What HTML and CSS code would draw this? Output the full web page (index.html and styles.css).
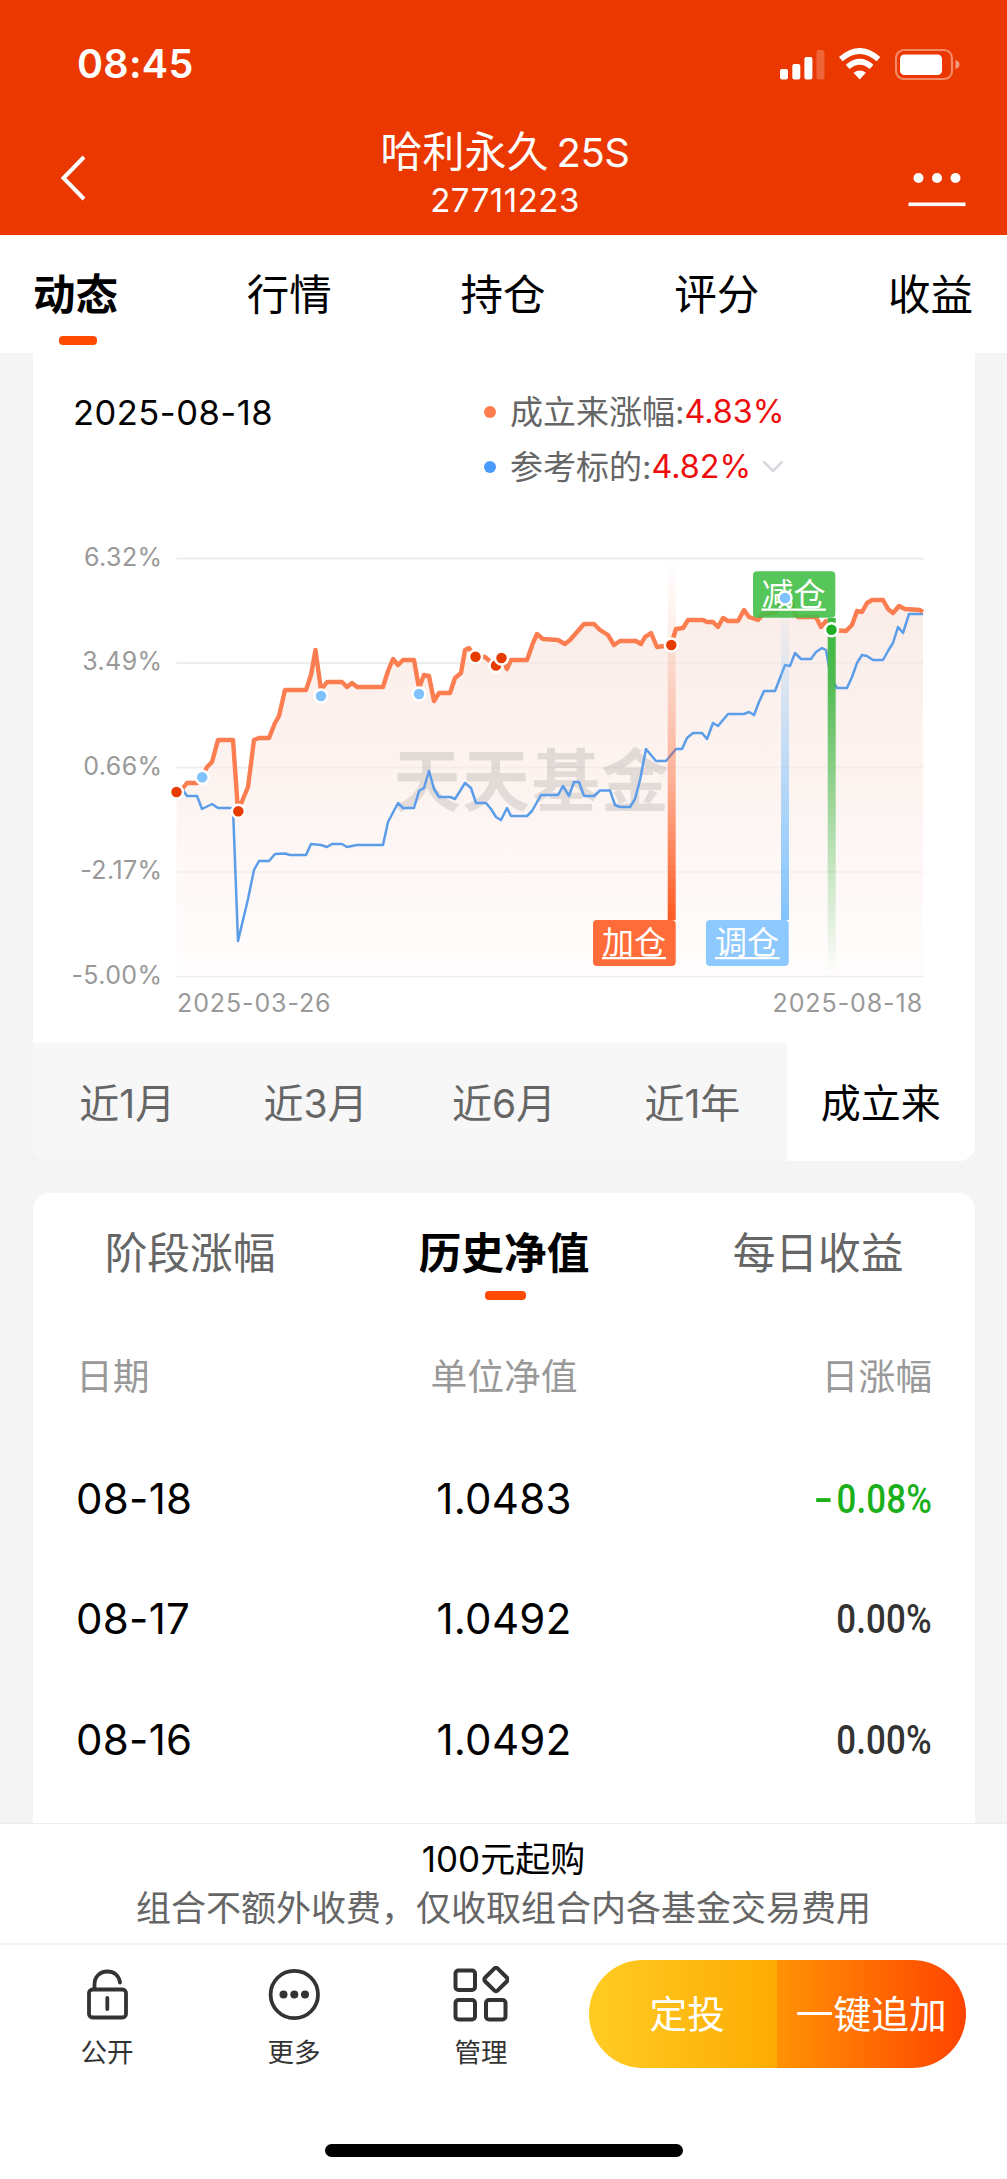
FILE: index.html
```html
<!DOCTYPE html>
<html lang="zh-CN">

<head>
    <meta charset="UTF-8" />
    <meta name="viewport" content="width=device-width, initial-scale=1.0" />
    <title>哈利永久25S</title>
    <link rel="stylesheet" href="styles.css">
</head>

<body>
    <header class="header">
        <div class="status-bar">
            <span class="time">08:45</span>
            <svg class="status-icons" width="182" height="36" viewBox="779 45 182 36" fill="#fff">
                <rect x="780" y="68" width="8" height="10.5" rx="2" />
                <rect x="792.3" y="63" width="8" height="15.5" rx="2" />
                <rect x="804.4" y="56" width="8" height="22.5" rx="2" />
                <rect x="816.5" y="49" width="8" height="29.5" rx="2" opacity=".22" />
                <path d="M840.8 58.2Q859.7 41.8 878.5 58.2M847.7 65.9Q859.7 55.6 871.6 65.9" fill="none" stroke="#fff" stroke-width="5.6" />
                <path d="M853.5 71.8q6.2-4.8 12.4 0l-6.2 6.7z" />
                <rect x="896" y="49" width="56" height="29" rx="8" fill="none" stroke="#fff" stroke-width="2.2" opacity=".42" />
                <rect x="900" y="53.5" width="42" height="20.5" rx="4.5" />
                <path d="M955.5 59q4 1.2 4 4.6t-4 4.6z" opacity=".5" />
            </svg>
        </div>
        <div class="nav-bar">
            <svg class="back" width="28" height="48" viewBox="0 0 28 48" fill="none" stroke="#fff" stroke-width="4">
                <path d="M24 3L3.5 24L24 45" />
            </svg>
            <div class="nav-title">
                <h1>哈利永久<span class="num">25S</span></h1>
                <p>27711223</p>
            </div>
            <svg class="more" width="58" height="36" viewBox="0 0 58 36" fill="#fff">
                <circle cx="10.5" cy="7" r="5" />
                <circle cx="29" cy="7" r="5" />
                <circle cx="47.5" cy="7" r="5" />
                <rect x="0.5" y="31.5" width="57" height="3.6" />
            </svg>
        </div>
    </header>

    <nav class="tabs">
        <a class="tab active">动态</a>
        <a class="tab">行情</a>
        <a class="tab">持仓</a>
        <a class="tab">评分</a>
        <a class="tab">收益</a>
    </nav>

    <main class="content">
        <section class="card chart-card">
            <div class="summary">
                <div class="summary-date">2025-08-18</div>
                <div class="legend">
                    <div class="legend-row"><i class="dot orange"></i>成立来涨幅:<b>4.83%</b></div>
                    <div class="legend-row"><i class="dot blue"></i>参考标的:<b>4.82%</b>
                        <svg width="22" height="14" viewBox="0 0 22 14" fill="none" stroke="#d5d8e0" stroke-width="2.5">
                            <path d="M1.5 1.5L11 11L20.5 1.5" />
                        </svg>
                    </div>
                </div>
            </div>

            <svg class="chart" width="942" height="523" viewBox="33 520 942 523">
                <defs>
                    <linearGradient id="area" x1="0" y1="598" x2="0" y2="976" gradientUnits="userSpaceOnUse">
                        <stop offset="0" stop-color="#f9e7e1" stop-opacity=".75" />
                        <stop offset=".5" stop-color="#fbece7" stop-opacity=".6" />
                        <stop offset="1" stop-color="#fffafa" stop-opacity=".5" />
                    </linearGradient>
                    <linearGradient id="barAdd" x1="0" y1="0" x2="0" y2="1">
                        <stop offset="0" stop-color="#ff5a22" stop-opacity="0" />
                        <stop offset=".25" stop-color="#ff5a22" stop-opacity=".12" />
                        <stop offset=".6" stop-color="#ff5a22" stop-opacity=".42" />
                        <stop offset="1" stop-color="#ff5a22" />
                    </linearGradient>
                    <linearGradient id="barSwap" x1="0" y1="0" x2="0" y2="1">
                        <stop offset="0" stop-color="#82c3fc" stop-opacity="0" />
                        <stop offset="1" stop-color="#82c3fc" />
                    </linearGradient>
                    <linearGradient id="barCut" x1="0" y1="0" x2="0" y2="1">
                        <stop offset="0" stop-color="#3dba41" />
                        <stop offset=".15" stop-color="#4cba4d" />
                        <stop offset="1" stop-color="#5ec45f" stop-opacity="0" />
                    </linearGradient>
                </defs>

                <!-- 网格 -->
                <g stroke="#ededed" stroke-width="2">
                    <path d="M176.5 558.5H923.5M176.5 663H923.5M176.5 767.5H923.5M176.5 872H923.5M176.5 976.5H923.5" />
                </g>
                <g class="axis" text-anchor="end">
                    <text x="162.5" y="565.5">6.32%</text>
                    <text x="162.5" y="670">3.49%</text>
                    <text x="162.5" y="774.5">0.66%</text>
                    <text x="162.5" y="879">-2.17%</text>
                    <text x="162.5" y="983.5">-5.00%</text>
                </g>
                <g class="axis">
                    <text x="177" y="1011.5" textLength="154">2025-03-26</text>
                    <text x="772.5" y="1011.5" textLength="150">2025-08-18</text>
                </g>

                <path fill="url(#area)" d="M176.5 792L183 788L187 783H197L202 777L207 767L212 762L218 740H233L238 811L248 787L254 740L259 738H269L275 723L279 716L285 690H306L311 675L315 649L321 690L327 682H342L347 687L352 683L357 687H383L388 671L393 659L398 665L403 660H414L419 688L424 675L429 676L434 701L439 693H450L455 678L461 673L465 650L469 648L475 657H485L491 662L496 666L501 658L507 669L511 660H527L533 643L537 634L543 639L558 640L565 644L570 640L584 624H594L600 630L608 635L614 645L620 641H636L641 644L645 637L651 633L657 647L671 645L676 629L683 628L688 620H703L707 622H713L718 627L723 618L728 621H738L744 610L749 617L758 620L763 614L775 613L785 598L792 602L795 614L798 617H816L821 627L826 621L831 630L846 631L852 625L857 611L862 612L867 603L872 600H883L888 609L893 613L899 606L905 609L920 610L923 612V976H176.5Z" />
                <text class="watermark" x="393" y="806" textLength="276">天天基金</text>
                <path class="line-blue" d="M176.5 792L183 790L187 796H197L202 809L212 804L218 808H233L238 941L248 899L254 870L259 861H269L275 854L285 853.5L290 855H306L311 844L321 845L327 847L332 844H342L347 847L357 845H383L388 822L398 803L403 808H414L419 791L424 788L429 771L434 789L439 797H450L455 799L465 783L471 788L476 803H486L491 809L496 817L501 820L507 808L511 816H527L532 811L541 795H558L563 786L569 796L574 782H579L584 796H594L600 790.5H610L615 805L620 807H630L635 799L640 780L646 749L656 761H666L671 755L676 749H682L687 738L693 733H702L707 739L713 723L718 726L728 714H744L749 712L754 715L759 702L764 691H775L785 665L790 666L795 653L801 659H811L816 652L822 648L826 650L831 678L837 688H847L852 677L857 663L862 655L867 656L873 660H883L888 651L893 643L898 627L903 633L909 614H923" />
                <path class="line-orange" d="M176.5 792L183 788L187 783H197L202 777L207 767L212 762L218 740H233L238 811L248 787L254 740L259 738H269L275 723L279 716L285 690H306L311 675L315.5 650L321 690L327 682H342L347 687L352 683L357 687H383L388 671L393 659L398 665L403 660H414L419 688L424 675L429 676L434 701L439 693H450L455 678L461 673L465 650L469 648L475 657H485L491 662L496 666L501 658L507 669L511 660H527L533 643L537 634L543 639L558 640L565 644L570 640L584 624H594L600 630L608 635L614 645L620 641H636L641 644L645 637L651 633L657 647L671 645L676 629L683 628L688 620H703L707 622H713L718 627L723 618L728 621H738L744 610L749 617L758 620L763 614L775 613L785 598L792 602L795 614L798 617H816L821 627L826 621L831 630L846 631L852 625L857 611L862 612L867 603L872 600H883L888 609L893 613L899 606L905 609L920 610L923 612" />

                <!-- 调仓标记 -->
                <rect x="667.7" y="558" width="8" height="362" fill="url(#barAdd)" />
                <rect x="781" y="598" width="8" height="322" fill="url(#barSwap)" />
                <rect x="827.7" y="618" width="8" height="355" fill="url(#barCut)" />
                <rect x="593" y="920" width="82.7" height="46" rx="4" fill="#ff6c39" />
                <rect x="706" y="920" width="82.7" height="46" rx="4" fill="#8dc8fe" />
                <rect x="753" y="571.3" width="82.3" height="46.5" rx="4" fill="#44bf48" fill-opacity=".9" />
                <g class="flag">
                    <text x="602" y="953.5">加仓</text>
                    <text x="715" y="953.5">调仓</text>
                    <text x="761.5" y="605.5">减仓</text>
                </g>
                <path d="M602 958.2H666M715 958.2H779.5M761.5 609.7H826" stroke="#fff" stroke-width="2.2" />

                <g fill="#e63c00" stroke="#fff" stroke-width="2.5">
                    <circle cx="176.5" cy="792" r="6.5" />
                    <circle cx="238.3" cy="811.3" r="6.5" />
                    <circle cx="475.5" cy="656.7" r="6.5" />
                    <circle cx="496" cy="665.5" r="6.5" />
                    <circle cx="501.5" cy="658" r="6.5" />
                    <circle cx="671.3" cy="645" r="6.5" />
                </g>
                <g fill="#7ec1fc" stroke="#fff" stroke-width="2.5">
                    <circle cx="202.2" cy="777.3" r="6.5" />
                    <circle cx="321" cy="696" r="6.5" />
                    <circle cx="419" cy="694" r="6.5" />
                    <circle cx="785" cy="598" r="6.5" />
                </g>
                <circle cx="831.5" cy="629.7" r="6.5" fill="#20ae26" stroke="#fff" stroke-width="2.5" />
            </svg>

            <div class="ranges">
                <a>近<span>1</span>月</a>
                <a>近<span>3</span>月</a>
                <a>近<span>6</span>月</a>
                <a>近<span>1</span>年</a>
                <a class="active">成立来</a>
            </div>
        </section>

        <section class="card history-card">
            <div class="sub-tabs">
                <a>阶段涨幅</a>
                <a class="active">历史净值</a>
                <a>每日收益</a>
            </div>
            <div class="row row-head"><span>日期</span><span>单位净值</span><span>日涨幅</span></div>
            <div class="row"><span>08-18</span><span>1.0483</span><span class="rate down"><i>-</i>0.08%</span></div>
            <div class="row"><span>08-17</span><span>1.0492</span><span class="rate">0.00%</span></div>
            <div class="row"><span>08-16</span><span>1.0492</span><span class="rate">0.00%</span></div>
        </section>
    </main>

    <footer class="footer">
        <div class="notice">
            <p class="notice-main"><span>100</span>元起购</p>
            <p class="notice-sub">组合不额外收费，仅收取组合内各基金交易费用</p>
        </div>
        <div class="actions">
            <a class="action">
                <svg width="56" height="56" viewBox="0 0 56 56" fill="none" stroke="#333" stroke-width="3.8" stroke-linecap="round">
                    <rect x="10" y="23.5" width="37" height="28" rx="3.5" />
                    <path d="M15.5 23V18.5C15.5 10.500 21 5.500 28.3 5.500C35 5.500 40 9.500 41 16.500M28.3 32V43" />
                </svg>
                公开
            </a>
            <a class="action">
                <svg width="56" height="56" viewBox="0 0 56 56" fill="#333">
                    <circle cx="28.3" cy="28.5" r="23.7" fill="none" stroke="#333" stroke-width="3.8" />
                    <circle cx="17.5" cy="28.5" r="4" />
                    <circle cx="28.3" cy="28.5" r="4" />
                    <circle cx="39" cy="28.5" r="4" />
                </svg>
                更多
            </a>
            <a class="action">
                <svg width="56" height="56" viewBox="0 0 56 56" fill="none" stroke="#333" stroke-width="4">
                    <rect x="2.5" y="4.5" width="19.5" height="19.5" rx="3" />
                    <rect x="2.5" y="34" width="19.5" height="19.5" rx="3" />
                    <rect x="33" y="34" width="19.5" height="19.5" rx="3" />
                    <rect x="34" y="4.5" width="18" height="18" rx="2.5" transform="rotate(45 43 13.5)" />
                </svg>
                管理
            </a>
            <div class="buttons">
                <a class="btn-plan">定投</a>
                <a class="btn-buy">一键追加</a>
            </div>
        </div>
        <div class="home-indicator"></div>
    </footer>
</body>

</html>
```

FILE: styles.css
```css
* {
    box-sizing: border-box;
}

body {
    margin: 0;
    height: 2179px;
    display: flex;
    flex-direction: column;
    overflow: hidden;
    font-family: Inter, "Noto Sans CJK SC", sans-serif;
    background-color: #f4f4f4;
    color: #000;
}

h1,
p {
    margin: 0;
    font-weight: 400;
}

i {
    font-style: normal;
}

svg {
    display: block;
    flex-shrink: 0;
}

.header {
    height: 235px;
    background-color: #ea3800;
    color: #fff;
}

.status-bar {
    height: 128px;
    padding: 0 46px 0 77px;
    display: flex;
    justify-content: space-between;
    align-items: center;
}

.time {
    font-size: 39.5px;
    font-weight: 600;
    letter-spacing: 0.3px;
}

.nav-bar {
    height: 107px;
    padding: 0 41px 0 60px;
    display: flex;
    justify-content: space-between;
}

.back {
    margin-top: 26px;
}

.more {
    margin-top: 43px;
}

.nav-title {
    text-align: center;
    padding-left: 14px;
}

.nav-title h1 {
    font-size: 42px;
    line-height: 48px;
}

.nav-title .num {
    margin-left: 8px;
    font-size: 40px;
    letter-spacing: -0.5px;
}

.nav-title p {
    font-size: 33px;
    line-height: 46px;
    letter-spacing: 0.5px;
}

.tabs {
    height: 118px;
    padding: 0 34px 0 33px;
    display: flex;
    justify-content: space-between;
    background-color: #fff;
    font-size: 42.5px;
}

.tab {
    height: 110px;
    line-height: 120px;
    display: flex;
    flex-direction: column;
    align-items: center;
}

.tab.active {
    font-weight: 700;
}

.tab.active::after {
    content: "";
    width: 38px;
    height: 9px;
    margin-top: -19px;
    margin-left: 4px;
    flex-shrink: 0;
    border-radius: 4px;
    background-color: #ff4a00;
}

.content {
    height: 1470px;
    padding: 0 32px 0 33px;
    display: flex;
    flex-direction: column;
    gap: 32px;
    overflow: hidden;
}

.card {
    background-color: #fff;
    overflow: hidden;
    flex-shrink: 0;
}

.chart-card {
    border-radius: 0 0 16px 16px;
}

.summary {
    height: 167px;
    padding: 31px 0 0 40px;
    display: flex;
}

.summary-date {
    width: 411px;
    font-size: 34.5px;
    line-height: 57px;
    letter-spacing: 0.5px;
}

.legend-row {
    height: 55px;
    display: flex;
    align-items: center;
    font-size: 33px;
    line-height: 46px;
    color: #666;
}

.legend-row b {
    font-weight: 400;
    font-size: 32.3px;
    color: #ee0c0c;
}

.legend-row svg {
    margin-left: 11px;
}

.dot {
    width: 12px;
    height: 12px;
    margin-right: 14px;
    border-radius: 50%;
}

.dot.orange {
    background-color: #ff7d4d;
}

.dot.blue {
    background-color: #4a9bff;
}

.chart text {
    font-family: Inter, "Noto Sans CJK SC", sans-serif;
}

.chart .axis {
    font-size: 25px;
    fill: #999;
    letter-spacing: 0.4px;
}

.chart .watermark {
    font-size: 68px;
    font-weight: 700;
    fill: #000;
    fill-opacity: 0.1;
}

.chart .flag {
    font-size: 32px;
    fill: #fff;
}

.line-orange,
.line-blue {
    fill: none;
    stroke-linejoin: round;
}

.line-orange {
    stroke: #fb7d50;
    stroke-width: 4.4;
}

.line-blue {
    stroke: #5b9de9;
    stroke-width: 2.5;
}

.ranges {
    height: 118px;
    display: flex;
    background-color: #f7f7f7;
    font-size: 40px;
    line-height: 122px;
    color: #666;
}

.ranges a {
    flex: 1;
    text-align: center;
}

.ranges span {
    font-size: 39px;
}

.ranges .active {
    background-color: #fff;
    color: #000;
}

.history-card {
    height: 640px;
    border-radius: 16px 16px 0 0;
}

.sub-tabs {
    height: 124px;
    display: flex;
    font-size: 42.7px;
    line-height: 121px;
    color: #666;
}

.sub-tabs a {
    flex: 1;
    height: 108px;
    display: flex;
    flex-direction: column;
    align-items: center;
}

.sub-tabs .active {
    font-weight: 700;
    color: #000;
}

.sub-tabs .active::after {
    content: "";
    width: 41px;
    height: 9px;
    margin-top: -23px;
    margin-left: 2px;
    flex-shrink: 0;
    border-radius: 4px;
    background-color: #ff4a00;
}

.row {
    height: 120.7px;
    padding: 0 43px 0 43px;
    display: grid;
    grid-template-columns: 1fr 1fr 1fr;
    align-items: center;
    font-size: 42px;
    letter-spacing: 0.3px;
}

.row span:nth-child(2) {
    text-align: center;
}

.row span:nth-child(3) {
    justify-self: end;
}

.row-head {
    font-size: 36.8px;
    line-height: 50px;
    letter-spacing: 0;
    color: #999;
}

.rate {
    font-family: Roboto, sans-serif;
    font-weight: 500;
    font-size: 41.5px;
    letter-spacing: 0.2px;
    color: #333;
    transform: scaleX(0.84);
    transform-origin: right;
}

.rate i {
    display: inline-block;
    margin-right: 4px;
    transform: scaleX(1.6);
    transform-origin: right;
}

.rate.down {
    color: #1bb01b;
}

.footer {
    height: 356px;
    background-color: #fff;
    border-top: 1px solid #eee;
}

.notice {
    height: 121px;
    padding-top: 11px;
    border-bottom: 2px solid #f3f3f3;
    text-align: center;
    font-size: 35px;
    line-height: 49px;
}

.notice-sub {
    color: #666;
}

.actions {
    height: 190px;
    padding: 15px 0 0 13.5px;
    display: flex;
    align-items: flex-start;
}

.action {
    width: 187px;
    padding-top: 6px;
    display: flex;
    flex-direction: column;
    align-items: center;
    gap: 10px;
    font-size: 26.5px;
    line-height: 40px;
    color: #333;
}

.buttons {
    width: 377px;
    height: 108px;
    margin-left: 14px;
    display: flex;
    border-radius: 54px;
    overflow: hidden;
    font-size: 37.7px;
    line-height: 108px;
    text-align: center;
    color: #fff;
}

.buttons a {
    flex: 1;
}

.buttons .btn-plan {
    padding-left: 9px;
    background: linear-gradient(to right, #ffcc24, #fdab03);
}

.buttons .btn-buy {
    background: linear-gradient(to right, #ff9204, #ff4400);
}

/* keep both halves equal whatever the label offset */
.btn-plan,
.btn-buy {
    min-width: 188.5px;
}

.home-indicator {
    width: 358px;
    height: 13px;
    margin: 9px auto 0;
    border-radius: 7px;
    background-color: #000;
}
```
